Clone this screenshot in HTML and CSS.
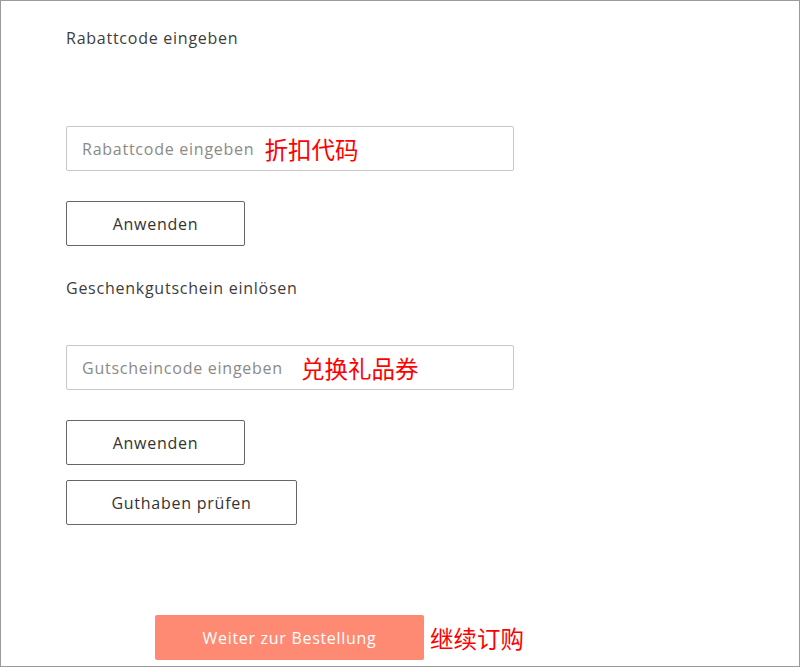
FILE: index.html
```html
<!DOCTYPE html>
<html lang="de">
<head>
<meta charset="utf-8">
<link rel="stylesheet" href="styles.css">
</head>
<body>
<div class="frame">
  <div class="label label-first">Rabattcode eingeben</div>
  <div class="field field-first">
    <span class="placeholder">Rabattcode eingeben</span>
    <span class="note note-discount">折扣代码</span>
  </div>
  <button class="btn btn-apply btn-first">Anwenden</button>

  <div class="label label-second">Geschenkgutschein einlösen</div>
  <div class="field field-second">
    <span class="placeholder">Gutscheincode eingeben</span>
    <span class="note note-gift">兑换礼品券</span>
  </div>
  <button class="btn btn-apply btn-second">Anwenden</button>
  <button class="btn btn-balance">Guthaben prüfen</button>

  <div class="checkout-row">
    <button class="btn-checkout">Weiter zur Bestellung</button>
    <span class="note note-checkout">继续订购</span>
  </div>
</div>
</body>
</html>
```

FILE: styles.css
```css
html, body {
  margin: 0;
  padding: 0;
  background: #fff;
}

.frame {
  box-sizing: border-box;
  width: 800px;
  height: 667px;
  border: 1px solid #9a9a9a;
  padding: 27px 0 0 65px;
  display: flex;
  flex-direction: column;
  align-items: flex-start;
  font-family: "Open Sans", "Liberation Sans", sans-serif;
  color: #333;
  overflow: hidden;
}

.label {
  font-size: 16px;
  line-height: 20px;
  height: 20px;
  color: #3d3d3d;
  letter-spacing: 0.75px;
}

.label-second {
  margin-top: 32px;
}

.field {
  box-sizing: border-box;
  width: 448px;
  height: 45px;
  border: 1px solid #c8c8c8;
  border-radius: 2px;
  display: flex;
  align-items: center;
  padding-left: 15px;
}

.field-first {
  margin-top: 78px;
}

.field-second {
  margin-top: 47px;
}

.placeholder {
  font-size: 16px;
  color: #8a8a8a;
  letter-spacing: 0.75px;
}

.note {
  font-family: "Noto Sans CJK SC", sans-serif;
  font-size: 23.5px;
  color: #ff0000;
  line-height: 30px;
  letter-spacing: 0;
}

.note-discount {
  margin-left: 10px;
}

.note-gift {
  margin-left: 18px;
}

.btn {
  box-sizing: border-box;
  height: 45px;
  background: #fff;
  border: 1px solid #666;
  border-radius: 2px;
  font-family: "Open Sans", "Liberation Sans", sans-serif;
  font-size: 16px;
  color: #333;
  letter-spacing: 0.75px;
  padding: 0;
}

.btn-apply {
  width: 179px;
}

.btn-first {
  margin-top: 30px;
}

.btn-second {
  margin-top: 30px;
}

.btn-balance {
  width: 231px;
  margin-top: 15px;
}

.checkout-row {
  margin-top: 90px;
  margin-left: 89px;
  display: flex;
  align-items: center;
}

.btn-checkout {
  box-sizing: border-box;
  width: 269px;
  height: 45px;
  border: none;
  border-radius: 2px;
  background: #ff8a73;
  color: #fff;
  font-family: "Open Sans", "Liberation Sans", sans-serif;
  font-size: 16px;
  letter-spacing: 0.7px;
  padding: 0;
}

.note-checkout {
  margin-left: 6px;
}
```
